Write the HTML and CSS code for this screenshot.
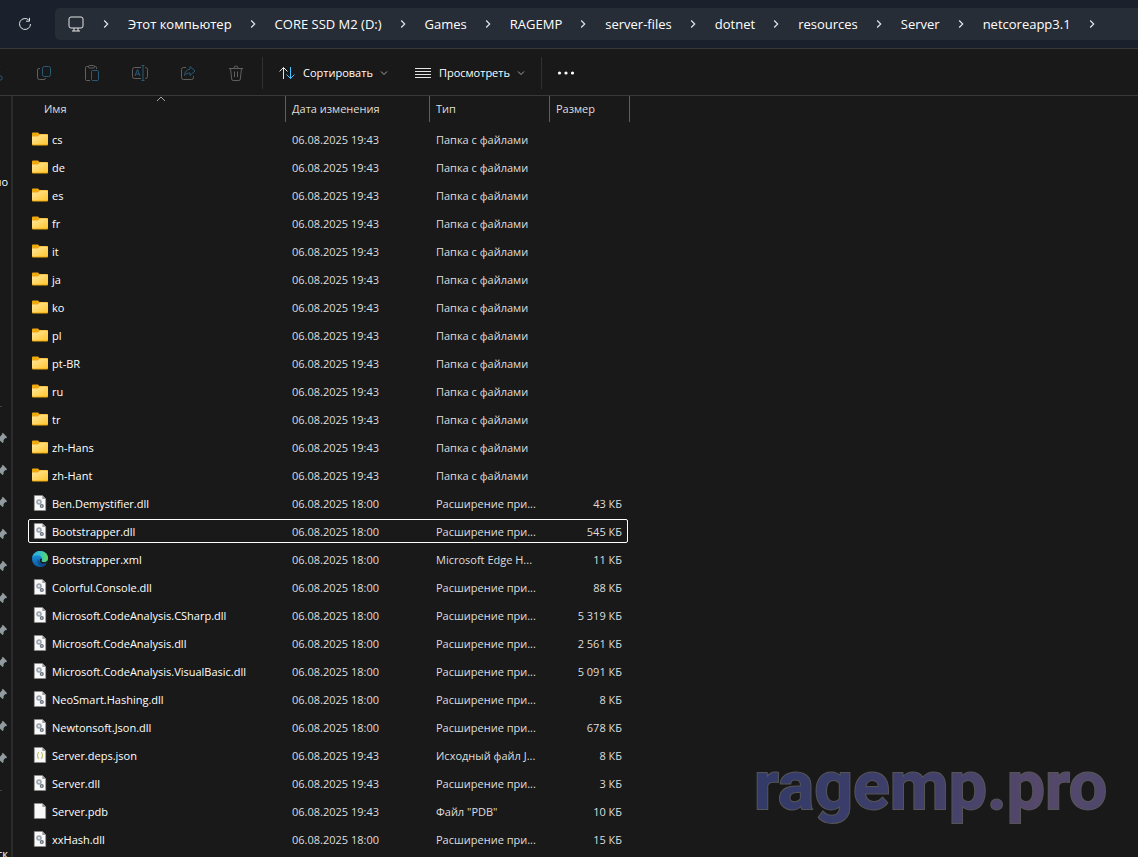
FILE: index.html
```
<!DOCTYPE html>
<html lang="ru">
<head>
  <meta charset="UTF-8">
  <meta name="viewport" content="width=device-width, initial-scale=1.0">
  <title>netcoreapp3.1</title>
  <link rel="stylesheet" href="styles.css">
</head>
<body>
  <!-- Shared icons -->
  <svg class="sprite" aria-hidden="true">
    <defs>
      <linearGradient id="folderFill" x1="0" y1="0" x2="1" y2="1">
        <stop offset="0" stop-color="#ffe9a0"/>
        <stop offset="1" stop-color="#ffc62f"/>
      </linearGradient>
      <linearGradient id="edgeGreen" x1="0" y1="0" x2="1" y2="0">
        <stop offset="0" stop-color="#2aa9e0"/>
        <stop offset="0.5" stop-color="#35c1c4"/>
        <stop offset="1" stop-color="#63d957"/>
      </linearGradient>
      <linearGradient id="edgeBlue" x1="0" y1="0" x2="0" y2="1">
        <stop offset="0" stop-color="#1fa0e8"/>
        <stop offset="1" stop-color="#0c59a4"/>
      </linearGradient>
      <linearGradient id="markFill" x1="0" y1="0" x2="1" y2="0">
        <stop offset="0" stop-color="#323a68"/>
        <stop offset="0.5" stop-color="#41406a"/>
        <stop offset="0.8" stop-color="#55486a"/>
        <stop offset="1" stop-color="#4f486c"/>
      </linearGradient>
    </defs>
    <symbol id="folder" viewBox="0 0 16 16">
      <path fill="#f0a90c" d="M0 2.500a1 1 0 0 1 1-1h5L7.500 3H15a1 1 0 0 1 1 1v9.500a1 1 0 0 1-1 1H1a1 1 0 0 1-1-1z"/>
      <path fill="url(#folderFill)" d="M0 5.500h5.800L8 3.500h7.200a.8.8 0 0 1 .8.800v8.500a.8.8 0 0 1-.8.800H.8a.8.8 0 0 1-.8-.8z"/>
    </symbol>
    <symbol id="page" viewBox="0 0 16 16">
      <path fill="#f8f8f8" stroke="#8a8a8a" stroke-width=".6" d="M2.300.5h8.200l3.200 3.200v11.800H2.300z"/>
      <path fill="#9a9a9a" d="M10.300.5v3.400h3.400z"/>
    </symbol>
    <symbol id="dll" viewBox="0 0 16 16">
      <use href="#page"/>
      <circle cx="7" cy="7" r="2" fill="#dfe3e6" stroke="#98a2ac" stroke-width="1.500"/>
      <circle cx="9.800" cy="11" r="1.400" fill="#dfe3e6" stroke="#66717c" stroke-width="1.300"/>
    </symbol>
    <symbol id="json" viewBox="0 0 16 16">
      <use href="#page"/>
      <path fill="none" stroke="#b9b23c" d="M6.800 5.500c-1.300 0-.9.800-.9 1.600S5.600 8.500 5 8.500c.6 0 .9.600.9 1.400s-.4 1.600.9 1.600M9.200 5.500c1.300 0 .9.800.9 1.600s.3 1.400.9 1.400c-.6 0-.9.600-.9 1.400s.4 1.600-.9 1.600"/>
    </symbol>
    <symbol id="edge" viewBox="0 0 16 16">
      <circle cx="8" cy="8" r="8" fill="url(#edgeBlue)"/>
      <path fill="url(#edgeGreen)" d="M.3 6.500C1.200 2.600 4.300 0 8 0c4.600 0 8 3.200 8 7 0 2.600-1.800 4.200-4 4.200-1.600 0-2.600-.6-2.600-1.200 0-.5.700-.7.700-2C10.100 6 8.100 4.300 5.600 4.300 3.300 4.300 1.300 5.200.3 6.500z"/>
      <path fill="#0b4a8c" d="M6 7.500c-1.500 3.300.7 7.500 4.500 8.100 1.800-.5 3.300-1.700 4.200-3.200-2.700 1.300-8.200.3-8.700-4.900z"/>
      <path fill="#191919" d="M9.400 10c0 .6 1 1.200 2.600 1.200 1.500 0 2.700-.7 3.400-1.800l.3 1.200-1 1.800c-3.600 1.300-7.200-.2-7-3.200.1-1 .9-1.800 2.200-1.400.4.900-.5 1.400-.5 2.200z"/>
    </symbol>
    <symbol id="pin" viewBox="0 0 14 14">
      <path fill="#919ba0" d="M8 1l5 5-1.200 1.200-.8-.2-2.200 2.300.1 2.400-1.200 1.200L4.900 10.100 1.500 13 1 12.500 3.900 9.100 1.200 6.300l1.200-1.200 2.400.1L7 3l-.2-.8z"/>
    </symbol>
    <symbol id="next" viewBox="0 0 10 10">
      <path d="M3.200 1.500L6.700 5 3.200 8.500"/>
    </symbol>
    <symbol id="down" viewBox="0 0 8 8">
      <path d="M1 2.500l3 3 3-3"/>
    </symbol>
  </svg>

  <header class="address-row">
    <button class="refresh" aria-label="Обновить">
      <svg class="line-icon" width="16" height="16" viewBox="0 0 16 16"><path d="M13.500 8A5.500 5.500 0 1 1 11.800 4M12.500 1.800v3.400H9"/></svg>
    </button>
    <nav class="address" aria-label="Путь">
      <svg class="line-icon" width="18" height="18" viewBox="0 0 18 18"><rect x="2" y="2" width="14" height="11" rx="2"/><path d="M7 13v3M11 13v3M5 16h8"/></svg>
      <svg class="next"><use href="#next"/></svg>
      <a href="#">Этот компьютер</a>
      <svg class="next"><use href="#next"/></svg>
      <a href="#">CORE SSD M2 (D:)</a>
      <svg class="next"><use href="#next"/></svg>
      <a href="#">Games</a>
      <svg class="next"><use href="#next"/></svg>
      <a href="#">RAGEMP</a>
      <svg class="next"><use href="#next"/></svg>
      <a href="#">server-files</a>
      <svg class="next"><use href="#next"/></svg>
      <a href="#">dotnet</a>
      <svg class="next"><use href="#next"/></svg>
      <a href="#">resources</a>
      <svg class="next"><use href="#next"/></svg>
      <a href="#">Server</a>
      <svg class="next"><use href="#next"/></svg>
      <a href="#">netcoreapp3.1</a>
      <svg class="next"><use href="#next"/></svg>
    </nav>
  </header>

  <div class="toolbar">
    <button class="tool cut" aria-label="Вырезать">
      <svg width="16" height="16" viewBox="0 0 16 16"><path class="grey" d="M4 1l6.500 10M12 1L5.500 11"/><circle class="blue" cx="4" cy="13" r="2.200"/><circle class="blue" cx="12" cy="13" r="2.200"/></svg>
    </button>
    <button class="tool" aria-label="Копировать">
      <svg width="16" height="16" viewBox="0 0 16 16"><path class="grey" d="M4 3.500H3a1.500 1.500 0 0 0-1.500 1.500v7.500A2 2 0 0 0 3.500 14.500H8a1.500 1.500 0 0 0 1.500-1.500"/><rect class="blue" x="6.500" y="1.500" width="8" height="10" rx="2"/></svg>
    </button>
    <button class="tool" aria-label="Вставить">
      <svg width="16" height="16" viewBox="0 0 16 16"><path class="grey" d="M5 1.500H2.500a1 1 0 0 0-1 1v12a1 1 0 0 0 1 1H6M10 1.500h1.500a1 1 0 0 1 1 1V4"/><rect class="grey" x="4.500" y=".5" width="6" height="2.500" rx="1"/><rect class="blue" x="7.500" y="5.500" width="7" height="10" rx="1"/></svg>
    </button>
    <button class="tool" aria-label="Переименовать">
      <svg width="16" height="16" viewBox="0 0 16 16"><path class="grey" d="M9 2.500H2.500a2 2 0 0 0-2 2v7a2 2 0 0 0 2 2H9M13 2.500h.5a2 2 0 0 1 2 2v7a2 2 0 0 1-2 2H13"/><path class="blue" d="M11 .5v15M9.500.5h3M9.500 15.500h3M3 11l2.500-6.500L8 11M4 9h3"/></svg>
    </button>
    <button class="tool" aria-label="Поделиться">
      <svg width="16" height="16" viewBox="0 0 16 16"><path class="grey" d="M6 2.500H3.500a2 2 0 0 0-2 2v8a2 2 0 0 0 2 2h8a2 2 0 0 0 2-2V11"/><path class="blue" d="M10 1.500L15 6l-5 4.500V8c-2.500 0-4 .8-5.500 2.500C4.800 7 6.500 4.500 10 4z"/></svg>
    </button>
    <button class="tool" aria-label="Удалить">
      <svg width="16" height="16" viewBox="0 0 16 16"><path class="grey" d="M.8 3.500h14.400M2.500 3.500l1.200 10.500a1.500 1.500 0 0 0 1.500 1.500h5.600a1.500 1.500 0 0 0 1.500-1.500l1.200-10.500M6 3a2 2 0 0 1 4 0M6.500 6.500v5.500M9.500 6.500v5.500"/></svg>
    </button>
    <span class="separator"></span>
    <button class="menu">
      <svg class="line-icon" width="18" height="16" viewBox="0 0 18 16"><path d="M5.500 14V2.500M1.500 6.500l4-4 4 4"/><path class="accent" d="M12.500 2v11.500M8.500 9.500l4 4 4-4"/></svg>
      Сортировать
      <svg class="down"><use href="#down"/></svg>
    </button>
    <button class="menu view">
      <svg class="line-icon" width="18" height="16" viewBox="0 0 18 16"><path d="M1 3.500h16M1 6.500h16M1 9.500h16M1 12.500h16"/></svg>
      Просмотреть
      <svg class="down"><use href="#down"/></svg>
    </button>
    <span class="separator"></span>
    <button class="tool more" aria-label="Дополнительно">
      <svg width="18" height="16" viewBox="0 0 18 16"><circle cx="2.500" cy="8" r="1.600"/><circle cx="9" cy="8" r="1.600"/><circle cx="15.500" cy="8" r="1.600"/></svg>
    </button>
  </div>

  <main class="content">
    <aside class="sidebar">
      <div class="side-item">но</div>
      <div class="side-space"></div>
      <div class="side-line"></div>
      <div class="side-item"><svg class="pin"><use href="#pin"/></svg></div>
      <div class="side-item"><svg class="pin"><use href="#pin"/></svg></div>
      <div class="side-item"><svg class="pin"><use href="#pin"/></svg></div>
      <div class="side-item"><svg class="pin"><use href="#pin"/></svg></div>
      <div class="side-item"><svg class="pin"><use href="#pin"/></svg></div>
      <div class="side-item"><svg class="pin"><use href="#pin"/></svg></div>
      <div class="side-item"><svg class="pin"><use href="#pin"/></svg></div>
      <div class="side-item"><svg class="pin"><use href="#pin"/></svg></div>
      <div class="side-item"><svg class="pin"><use href="#pin"/></svg></div>
      <div class="side-item"><svg class="pin"><use href="#pin"/></svg></div>
      <div class="side-item"><svg class="pin"><use href="#pin"/></svg></div>
      <div class="side-line"></div>
      <div class="side-item"></div>
      <div class="side-item">ск</div>
    </aside>

    <section class="files">
      <table>
        <thead>
          <tr>
            <th class="name"><button>Имя</button><svg class="sorted" viewBox="0 0 10 6"><path d="M1 5l4-4 4 4"/></svg></th>
            <th class="date"><button>Дата изменения</button></th>
            <th class="type"><button>Тип</button></th>
            <th class="size"><button>Размер</button></th>
          </tr>
        </thead>
        <tbody>
          <tr><td><svg class="icon"><use href="#folder"/></svg>cs</td><td>06.08.2025 19:43</td><td>Папка с файлами</td><td></td></tr>
          <tr><td><svg class="icon"><use href="#folder"/></svg>de</td><td>06.08.2025 19:43</td><td>Папка с файлами</td><td></td></tr>
          <tr><td><svg class="icon"><use href="#folder"/></svg>es</td><td>06.08.2025 19:43</td><td>Папка с файлами</td><td></td></tr>
          <tr><td><svg class="icon"><use href="#folder"/></svg>fr</td><td>06.08.2025 19:43</td><td>Папка с файлами</td><td></td></tr>
          <tr><td><svg class="icon"><use href="#folder"/></svg>it</td><td>06.08.2025 19:43</td><td>Папка с файлами</td><td></td></tr>
          <tr><td><svg class="icon"><use href="#folder"/></svg>ja</td><td>06.08.2025 19:43</td><td>Папка с файлами</td><td></td></tr>
          <tr><td><svg class="icon"><use href="#folder"/></svg>ko</td><td>06.08.2025 19:43</td><td>Папка с файлами</td><td></td></tr>
          <tr><td><svg class="icon"><use href="#folder"/></svg>pl</td><td>06.08.2025 19:43</td><td>Папка с файлами</td><td></td></tr>
          <tr><td><svg class="icon"><use href="#folder"/></svg>pt-BR</td><td>06.08.2025 19:43</td><td>Папка с файлами</td><td></td></tr>
          <tr><td><svg class="icon"><use href="#folder"/></svg>ru</td><td>06.08.2025 19:43</td><td>Папка с файлами</td><td></td></tr>
          <tr><td><svg class="icon"><use href="#folder"/></svg>tr</td><td>06.08.2025 19:43</td><td>Папка с файлами</td><td></td></tr>
          <tr><td><svg class="icon"><use href="#folder"/></svg>zh-Hans</td><td>06.08.2025 19:43</td><td>Папка с файлами</td><td></td></tr>
          <tr><td><svg class="icon"><use href="#folder"/></svg>zh-Hant</td><td>06.08.2025 19:43</td><td>Папка с файлами</td><td></td></tr>
          <tr><td><svg class="icon"><use href="#dll"/></svg>Ben.Demystifier.dll</td><td>06.08.2025 18:00</td><td>Расширение при...</td><td>43 КБ</td></tr>
          <tr class="focused"><td><svg class="icon"><use href="#dll"/></svg>Bootstrapper.dll</td><td>06.08.2025 18:00</td><td>Расширение при...</td><td>545 КБ</td></tr>
          <tr><td><svg class="icon"><use href="#edge"/></svg>Bootstrapper.xml</td><td>06.08.2025 18:00</td><td>Microsoft Edge H...</td><td>11 КБ</td></tr>
          <tr><td><svg class="icon"><use href="#dll"/></svg>Colorful.Console.dll</td><td>06.08.2025 18:00</td><td>Расширение при...</td><td>88 КБ</td></tr>
          <tr><td><svg class="icon"><use href="#dll"/></svg>Microsoft.CodeAnalysis.CSharp.dll</td><td>06.08.2025 18:00</td><td>Расширение при...</td><td>5 319 КБ</td></tr>
          <tr><td><svg class="icon"><use href="#dll"/></svg>Microsoft.CodeAnalysis.dll</td><td>06.08.2025 18:00</td><td>Расширение при...</td><td>2 561 КБ</td></tr>
          <tr><td><svg class="icon"><use href="#dll"/></svg>Microsoft.CodeAnalysis.VisualBasic.dll</td><td>06.08.2025 18:00</td><td>Расширение при...</td><td>5 091 КБ</td></tr>
          <tr><td><svg class="icon"><use href="#dll"/></svg>NeoSmart.Hashing.dll</td><td>06.08.2025 18:00</td><td>Расширение при...</td><td>8 КБ</td></tr>
          <tr><td><svg class="icon"><use href="#dll"/></svg>Newtonsoft.Json.dll</td><td>06.08.2025 18:00</td><td>Расширение при...</td><td>678 КБ</td></tr>
          <tr><td><svg class="icon"><use href="#json"/></svg>Server.deps.json</td><td>06.08.2025 19:43</td><td>Исходный файл J...</td><td>8 КБ</td></tr>
          <tr><td><svg class="icon"><use href="#dll"/></svg>Server.dll</td><td>06.08.2025 19:43</td><td>Расширение при...</td><td>3 КБ</td></tr>
          <tr><td><svg class="icon"><use href="#page"/></svg>Server.pdb</td><td>06.08.2025 19:43</td><td>Файл "PDB"</td><td>10 КБ</td></tr>
          <tr><td><svg class="icon"><use href="#dll"/></svg>xxHash.dll</td><td>06.08.2025 18:00</td><td>Расширение при...</td><td>15 КБ</td></tr>
        </tbody>
      </table>
    </section>
  </main>

  <svg class="watermark" width="370" height="80"><text x="0" y="56">ragemp.pro</text></svg>
</body>
</html>
```
FILE: styles.css
```
* {
  box-sizing: border-box;
}

body {
  display: flex;
  flex-direction: column;
  height: 100vh;
  margin: 0;
  overflow: hidden;
  background: #191919;
  color: #fff;
  font: 11px/16px "Open Sans", "Noto Sans", sans-serif;
}

button {
  padding: 0;
  border: none;
  background: none;
  color: inherit;
  font: inherit;
}

svg {
  flex: none;
  fill: none;
}

.sprite {
  position: absolute;
  width: 0;
  height: 0;
}

.line-icon {
  stroke: #e4e4e4;
}

/* Address bar */
.address-row {
  display: flex;
  flex: none;
  align-items: center;
  height: 48px;
  background: #1a202c;
}

.refresh {
  display: flex;
  justify-content: center;
  width: 50px;
  margin-right: 5px;
}

.address {
  display: flex;
  flex: 1;
  align-items: center;
  height: 32px;
  padding-left: 12px;
  border-radius: 5px 0 0 5px;
  background: #272d37;
  font-size: 13px;
  white-space: nowrap;
}

.address a {
  color: #fff;
  text-decoration: none;
}

.next {
  width: 10px;
  height: 10px;
  margin: 0 17px 0 16px;
  stroke: #e4e4e4;
  stroke-width: 1.2px;
}

/* Command bar */
.toolbar {
  display: flex;
  flex: none;
  align-items: center;
  height: 48px;
  padding-top: 2px;
  border-top: 1px solid #393939;
  border-bottom: 1px solid #393939;
}

.tool {
  display: flex;
  justify-content: center;
  width: 48px;
}

.cut {
  margin-left: -28px;
}

.grey {
  stroke: #606060;
}

.blue {
  stroke: #285b78;
}

.accent {
  stroke: #4cc2ff;
}

.separator {
  width: 1px;
  height: 32px;
  margin-left: 2px;
  background: #303030;
}

.menu {
  display: flex;
  align-items: center;
  gap: 7px;
  margin-left: 15px;
}

.view {
  margin-left: 26px;
  margin-right: 14px;
}

.down {
  width: 8px;
  height: 8px;
  stroke: #a5a5a5;
}

.more svg {
  fill: #fff;
}

/* Navigation pane */
.content {
  display: flex;
  flex: 1;
  min-height: 0;
}

.sidebar {
  flex: none;
  width: 13px;
  padding-top: 70px;
  overflow: hidden;
  border-right: 2px solid #2b2b2b;
}

.side-item {
  display: flex;
  align-items: center;
  justify-content: flex-end;
  height: 32px;
  padding-right: 3px;
}

.side-space {
  height: 192px;
}

.side-line {
  width: 2px;
  height: 32px;
  background: linear-gradient(#444, #444) center / 100% 1px no-repeat;
}

.pin {
  width: 12px;
  height: 12px;
}

/* File list */
.files {
  flex: 1;
  padding-left: 13px;
}

table {
  width: 604px;
  border-spacing: 0;
  table-layout: fixed;
}

th {
  position: relative;
  height: 29px;
  padding: 0 0 3px;
  font-weight: normal;
  vertical-align: top;
}

th button {
  display: block;
  width: 100%;
  height: 26px;
  padding-left: 6px;
  border-right: 1px solid #5f5f5f;
  color: #dedede;
  text-align: left;
}

.name {
  width: 260px;
}

.date {
  width: 144px;
}

.type {
  width: 120px;
}

.size {
  width: 80px;
}

.name button {
  padding-left: 18px;
}

.sorted {
  position: absolute;
  top: 0;
  left: 130px;
  width: 10px;
  height: 6px;
  stroke: #a5a5a5;
}

td {
  height: 28px;
  padding: 2px 6px 0;
  overflow: hidden;
  color: #dedede;
  white-space: nowrap;
}

td:first-child {
  padding-top: 0;
  color: #fff;
}

td:last-child {
  padding-right: 8px;
  text-align: right;
}

.icon {
  width: 16px;
  height: 16px;
  margin-right: 4px;
  vertical-align: -3px;
}

.focused {
  border-radius: 4px;
  outline: 1px solid #fff;
  outline-offset: -3px;
}

/* Site mark over the list */
.watermark {
  position: absolute;
  right: 14px;
  bottom: 24px;
  overflow: visible;
  pointer-events: none;
}

.watermark text {
  fill: url(#markFill);
  stroke: #555;
  stroke-width: 2px;
  paint-order: stroke;
  font: bold 68px Roboto, sans-serif;
}
```
